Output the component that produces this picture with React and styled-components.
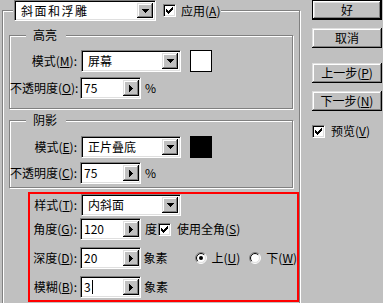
import React from "react";
import styled, { createGlobalStyle } from "styled-components";

const GlobalStyle = createGlobalStyle`
  html, body {
    margin: 0;
    padding: 0;
    background: #c0c0c0;
  }
  body {
    font-family: "Noto Sans CJK SC", "Liberation Sans", sans-serif;
    font-size: 12px;
    line-height: 14px;
    color: #000;
  }
`;

// little pixel drawings
const pixelPath = (rows) =>
  rows
    .map((row, y) =>
      row
        .split("")
        .map((c, x) => (c === "X" ? `M${x} ${y}h1v1h-1z` : ""))
        .join("")
    )
    .join("");

const CHECK = pixelPath([
  "......X",
  ".....XX",
  "X...XXX",
  "XX.XXX.",
  "XXXXX..",
  ".XXX...",
  "..X....",
]);

const DOWN = pixelPath(["XXXXXXX", ".XXXXX.", "..XXX..", "...X..."]);
const RIGHT = pixelPath(["X...", "XX..", "XXX.", "XXXX", "XXX.", "XX..", "X..."]);

const Dialog = styled.div`
  display: flex;
  width: 383px;
  height: 303px;
  overflow: hidden;
  background: #c0c0c0;
`;

const LeftPane = styled.div`
  width: 312px;
  flex: none;
  box-sizing: border-box;
  padding: 10px 0 0 2px;
`;

const RightPane = styled.div`
  display: flex;
  flex-direction: column;
  width: 71px;
`;

const etched = `
  border: 1px solid #808080;
  box-shadow: inset 1px 1px 0 #fff, 1px 1px 0 #fff;
`;

const OuterGroup = styled.div`
  position: relative;
  width: 298px;
  height: 320px;
  box-sizing: border-box;
  ${etched}
  padding-top: 24px;
  display: flex;
  flex-direction: column;
`;

const OuterLegend = styled.div`
  position: absolute;
  top: -11px;
  left: 10px;
  display: flex;
  align-items: center;
  padding: 0 1px;
  background: #c0c0c0;
  height: 21px;
`;

const Group = styled.div`
  position: relative;
  margin: ${(p) => p.$mt || 0}px 6px 0;
  ${etched}
  padding: ${(p) => p.$pt}px 0 ${(p) => p.$pb}px;
  display: flex;
  flex-direction: column;
  gap: ${(p) => p.$gap}px;
`;

const Legend = styled.div`
  position: absolute;
  top: -8px;
  left: 16px;
  padding: 0 9px 0 7px;
  background: #c0c0c0;
  line-height: 14px;
`;

const Annotation = styled.div`
  margin: 4px 0 0 25px;
  width: 271px;
  box-sizing: border-box;
  border: 2px solid #ff0000;
  padding: 0 0 2px;
  display: flex;
  flex-direction: column;
`;

const Row = styled.div`
  display: flex;
  align-items: center;
  height: 22px;
  margin-top: ${(p) => p.$mt || 0}px;
`;

const Label = styled.span`
  width: ${(p) => p.$w}px;
  flex: none;
  text-align: right;
  white-space: nowrap;
  margin-right: 3px;
`;

const Text = styled.span`
  white-space: nowrap;
  margin-left: ${(p) => p.$ml || 0}px;
`;

const sunken = `
  box-sizing: border-box;
  background: #fff;
  border: 1px solid;
  border-color: #808080 #fff #fff #808080;
  box-shadow: inset 1px 1px 0 #000, inset -1px -1px 0 #dfdfdf;
`;

const raised = `
  box-sizing: border-box;
  background: #c0c0c0;
  box-shadow: inset -1px -1px 0 #000, inset 1px 1px 0 #dfdfdf,
    inset -2px -2px 0 #808080, inset 2px 2px 0 #fff;
`;

const Combo = styled.div`
  ${sunken}
  display: flex;
  align-items: center;
  width: ${(p) => p.$w}px;
  height: ${(p) => p.$h || 22}px;
  margin-left: ${(p) => p.$ml || 0}px;
  padding: 2px 2px 2px 6px;
`;

const ComboText = styled.span`
  flex: 1;
  white-space: nowrap;
  letter-spacing: ${(p) => p.$ls || 0}px;
`;

const DropButton = styled.div`
  ${raised}
  width: 16px;
  align-self: stretch;
  display: flex;
  align-items: center;
  justify-content: center;
`;

const Spin = styled.div`
  ${sunken}
  display: flex;
  align-items: center;
  width: 61px;
  height: 22px;
  padding: 2px 1px 2px 3px;
`;

const SpinValue = styled.span`
  flex: 1;
  display: flex;
  align-items: center;
`;

const Caret = styled.span`
  display: inline-block;
  width: 1px;
  height: 14px;
  background: #000;
  margin-left: 1px;
`;

const SpinButton = styled.div`
  ${raised}
  width: 16px;
  align-self: stretch;
  display: flex;
  align-items: center;
  justify-content: center;
`;

const Swatch = styled.div`
  width: 22px;
  height: 22px;
  box-sizing: border-box;
  border: 1px solid #000;
  background: ${(p) => p.$color};
  margin-left: 9px;
`;

const Box = styled.div`
  ${sunken}
  width: 13px;
  height: 13px;
  flex: none;
  display: flex;
  align-items: center;
  justify-content: center;
  margin-left: ${(p) => p.$ml || 0}px;
`;

const CheckRow = styled.div`
  display: flex;
  align-items: center;
  margin-top: ${(p) => p.$mt || 0}px;
`;

const PushButton = styled.div`
  ${raised}
  width: 70px;
  height: 20px;
  display: flex;
  align-items: center;
  justify-content: center;
  white-space: nowrap;
  margin-top: ${(p) => p.$mt || 0}px;
  ${(p) =>
    p.$default &&
    `
    border: 1px solid #000;
    box-shadow: inset -1px -1px 0 #000, inset 1px 1px 0 #fff,
      inset -2px -2px 0 #808080, inset 2px 2px 0 #dfdfdf;
  `}
`;

const Pix = ({ d, w, h }) => (
  <svg width={w} height={h} viewBox={`0 0 ${w} ${h}`} shapeRendering="crispEdges">
    <path d={d} fill="#000" />
  </svg>
);

const Checkbox = ({ ml }) => (
  <Box $ml={ml}>
    <Pix d={CHECK} w={7} h={7} />
  </Box>
);

const arc = (r, from, to) => {
  const k = 0.7071;
  const p = (s) => `${6 + s[0] * r * k} ${6 + s[1] * r * k}`;
  return `M${p(from)}A${r} ${r} 0 0 1 ${p(to)}`;
};

const RadioIcon = styled.svg`
  flex: none;
  margin-left: ${(p) => p.$ml || 0}px;
`;

const Radio = ({ checked, ml }) => (
  <RadioIcon $ml={ml} width="12" height="12" viewBox="0 0 12 12">
    <circle cx="6" cy="6" r="5" fill="#fff" />
    <path d={arc(5.5, [-1, 1], [1, -1])} stroke="#808080" fill="none" />
    <path d={arc(5.5, [1, -1], [-1, 1])} stroke="#fff" fill="none" />
    <path d={arc(4.5, [-1, 1], [1, -1])} stroke="#000" fill="none" />
    <path d={arc(4.5, [1, -1], [-1, 1])} stroke="#dfdfdf" fill="none" />
    {checked && <circle cx="6" cy="6" r="2" fill="#000" />}
  </RadioIcon>
);

const ComboBox = ({ value, w, h, ml, ls }) => (
  <Combo $w={w} $h={h} $ml={ml}>
    <ComboText $ls={ls}>{value}</ComboText>
    <DropButton>
      <Pix d={DOWN} w={7} h={4} />
    </DropButton>
  </Combo>
);

const SpinField = ({ value, caret }) => (
  <Spin>
    <SpinValue>
      {value}
      {caret && <Caret />}
    </SpinValue>
    <SpinButton>
      <Pix d={RIGHT} w={4} h={7} />
    </SpinButton>
  </Spin>
);

const Key = ({ k }) => (
  <>
    (<u>{k}</u>)
  </>
);

const ColorGroup = ({ title, modeKey, mode, opacityKey, swatch, mt, pt, pb, gap }) => (
  <Group $mt={mt} $pt={pt} $pb={pb} $gap={gap}>
    <Legend>{title}</Legend>
    <Row>
      <Label $w={67}>
        模式<Key k={modeKey} />:
      </Label>
      <ComboBox value={mode} w={100} ml={1} />
      <Swatch $color={swatch} />
    </Row>
    <Row>
      <Label $w={67}>
        不透明度<Key k={opacityKey} />:
      </Label>
      <SpinField value="75" />
      <Text $ml={4}>%</Text>
    </Row>
  </Group>
);

export default function App() {
  return (
    <>
      <GlobalStyle />
      <Dialog>
        <LeftPane>
          <OuterGroup>
            <OuterLegend>
              <ComboBox value="斜面和浮雕" w={142} h={21} ls={1.5} />
              <Checkbox ml={7} />
              <Text $ml={5}>
                应用<Key k="A" />
              </Text>
            </OuterLegend>

            <ColorGroup
              title="高亮"
              modeKey="M"
              mode="屏幕"
              opacityKey="O"
              swatch="#fff"
              pt={14}
              pb={9}
              gap={5}
            />
            <ColorGroup
              title="阴影"
              modeKey="E"
              mode="正片叠底"
              opacityKey="C"
              swatch="#000"
              mt={11}
              pt={15}
              pb={3}
              gap={4}
            />

            <Annotation>
              <Row>
                <Label $w={47}>
                  样式<Key k="T" />:
                </Label>
                <ComboBox value="内斜面" w={100} ml={1} />
              </Row>
              <Row $mt={2}>
                <Label $w={47}>
                  角度<Key k="G" />:
                </Label>
                <SpinField value="120" />
                <Text $ml={4}>度</Text>
                <Checkbox ml={1} />
                <Text $ml={6}>
                  使用全角<Key k="S" />
                </Text>
              </Row>
              <Row $mt={7}>
                <Label $w={47}>
                  深度<Key k="D" />:
                </Label>
                <SpinField value="20" />
                <Text $ml={3}>象素</Text>
                <Radio checked ml={27} />
                <Text $ml={5}>
                  上<Key k="U" />
                </Text>
                <Radio ml={9} />
                <Text $ml={5}>
                  下<Key k="W" />
                </Text>
              </Row>
              <Row $mt={7}>
                <Label $w={47}>
                  模糊<Key k="B" />:
                </Label>
                <SpinField value="3" caret />
                <Text $ml={3}>象素</Text>
              </Row>
            </Annotation>
          </OuterGroup>
        </LeftPane>

        <RightPane>
          <PushButton $default>好</PushButton>
          <PushButton $mt={8}>取消</PushButton>
          <PushButton $mt={15}>
            上一步<Key k="P" />
          </PushButton>
          <PushButton $mt={8}>
            下一步<Key k="N" />
          </PushButton>
          <CheckRow $mt={13}>
            <Checkbox />
            <Text $ml={6}>
              预览<Key k="V" />
            </Text>
          </CheckRow>
        </RightPane>
      </Dialog>
    </>
  );
}
